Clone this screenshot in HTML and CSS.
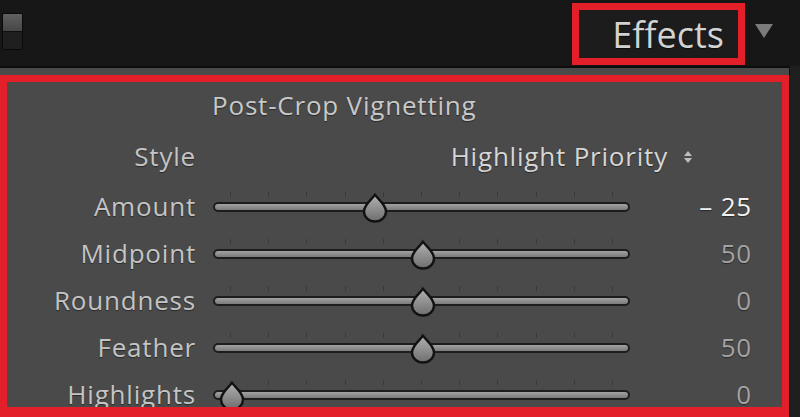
FILE: index.html
```html
<!DOCTYPE html>
<html lang="en">
<head>
<meta charset="utf-8">
<title>Effects – Post-Crop Vignetting</title>
<link rel="stylesheet" href="styles.css">
</head>
<body>
<div class="screen">
  <header class="topbar">
    <div class="toggle"><span class="toggle-on"></span><span class="toggle-off"></span></div>
    <div class="spacer"></div>
    <div class="effects-box"><span class="effects-title">Effects</span></div>
    <svg class="collapse" width="18" height="14" viewBox="0 0 18 14"><polygon points="0,0 18,0 9,14" fill="#7b7b7b"/></svg>
  </header>
  <div class="body-row">
    <section class="panel">
      <div class="highlight">
        <div class="grid">
          <div class="title">Post-Crop Vignetting</div>

          <div class="label style-label">Style</div>
          <div class="style-value">
            <span>Highlight Priority</span>
            <svg class="updown" width="8" height="12" viewBox="0 0 8 12"><polygon points="0,5 4,0 8,5" fill="#bdbdbd"/><polygon points="0,7 4,12 8,7" fill="#bdbdbd"/></svg>
          </div>

          <div class="label">Amount</div>
          <div class="slider">
            <div class="track"></div>
            <svg class="thumb" style="left:149px" width="26" height="30" viewBox="0 0 26 30"><use href="#drop"/></svg>
          </div>
          <div class="value value-active">– 25</div>

          <div class="label">Midpoint</div>
          <div class="slider">
            <div class="track"></div>
            <svg class="thumb" style="left:197px" width="26" height="30" viewBox="0 0 26 30"><use href="#drop"/></svg>
          </div>
          <div class="value">50</div>

          <div class="label">Roundness</div>
          <div class="slider">
            <div class="track"></div>
            <svg class="thumb" style="left:197px" width="26" height="30" viewBox="0 0 26 30"><use href="#drop"/></svg>
          </div>
          <div class="value">0</div>

          <div class="label">Feather</div>
          <div class="slider">
            <div class="track"></div>
            <svg class="thumb" style="left:197px" width="26" height="30" viewBox="0 0 26 30"><use href="#drop"/></svg>
          </div>
          <div class="value">50</div>

          <div class="label">Highlights</div>
          <div class="slider">
            <div class="track"></div>
            <svg class="thumb" style="left:6px" width="26" height="30" viewBox="0 0 26 30"><use href="#drop"/></svg>
          </div>
          <div class="value">0</div>
        </div>
      </div>
    </section>
    <div class="gutter"></div>
  </div>
</div>

<svg class="defs" width="0" height="0">
  <defs>
    <linearGradient id="dropfill" x1="0" y1="0" x2="0" y2="1">
      <stop offset="0" stop-color="#b2b2b2"/>
      <stop offset="1" stop-color="#6e6e6e"/>
    </linearGradient>
    <g id="drop">
      <path d="M13 1.5 C15 5.5 24 11 24 18.5 A11 10 0 0 1 2 18.5 C2 11 11 5.5 13 1.5 Z" fill="url(#dropfill)" stroke="#121212" stroke-width="2.4" stroke-linejoin="round"/>
    </g>
  </defs>
</svg>
</body>
</html>
```

FILE: styles.css
```css
html, body {
  margin: 0;
  padding: 0;
  background: #171717;
}

.screen {
  width: 800px;
  height: 417px;
  overflow: hidden;
  font-family: "Open Sans", "Liberation Sans", sans-serif;
}

.topbar {
  height: 66px;
  display: flex;
  align-items: flex-start;
  background: #171717;
}

.toggle {
  margin: 13px 0 0 2px;
  width: 21px;
  height: 37px;
  box-sizing: border-box;
  border: 1px solid #0a0a0a;
  border-radius: 2px;
  display: flex;
  flex-direction: column;
  overflow: hidden;
}

.toggle-on {
  height: 17px;
  background: linear-gradient(#606060, #464646);
}

.toggle-off {
  flex: 1;
  background: #1f1f1f;
  border-top: 1px solid #0e0e0e;
}

.spacer {
  flex: 1;
}

.effects-box {
  margin-top: 3px;
  width: 173px;
  height: 62px;
  box-sizing: border-box;
  border: 7px solid #e3202a;
  background: #1c1c1c;
  display: flex;
  align-items: center;
  justify-content: flex-end;
  padding-right: 14px;
}

.effects-title {
  font-size: 36px;
  line-height: 1;
  color: #d2d2d2;
  text-shadow: 0 1px 1px rgba(0, 0, 0, 0.6);
  position: relative;
  top: 1px;
}

.collapse {
  margin: 24px 27px 0 10px;
}

.body-row {
  display: flex;
  height: 351px;
}

.panel {
  width: 789px;
  border-top: 2px solid #0d0d0d;
  background: #4a4a4a;
  padding-top: 7px;
  box-sizing: border-box;
}

.gutter {
  flex: 1;
  background: #1f1f1f;
  border-left: 1px solid #0e0e0e;
}

.highlight {
  height: 342px;
  box-sizing: border-box;
  border: 7px solid #e3202a;
  border-bottom-width: 10px;
  overflow: hidden;
}

.grid {
  display: grid;
  grid-template-columns: 189px 435px 121px;
  grid-template-rows: 47px 54px repeat(5, 47px);
  color: #c4c4c4;
  font-size: 26px;
  letter-spacing: 0.8px;
  text-shadow: 0 1px 1px rgba(0, 0, 0, 0.45);
}

.grid > .slider {
  margin-left: 17px;
}

.title {
  grid-column: 2 / span 2;
  margin-left: 16px;
  line-height: 47px;
  color: #c8c8c8;
}

.label {
  grid-column: 1;
  text-align: right;
  line-height: 47px;
  white-space: nowrap;
}

.style-label {
  line-height: 54px;
}

.style-value {
  grid-column: 2 / span 2;
  display: flex;
  align-items: center;
  justify-content: flex-end;
  gap: 16px;
  padding-right: 60px;
  color: #d6d6d6;
  white-space: nowrap;
}

.updown {
  position: relative;
  top: 1px;
}

.slider {
  position: relative;
  display: flex;
  align-items: center;
  width: 417px;
  background-image: repeating-linear-gradient(to right, #393939 0 1px, transparent 1px 38.2px);
  background-size: 384px 5px;
  background-position: 17px 9px;
  background-repeat: no-repeat;
}

.track {
  width: 100%;
  height: 10px;
  box-sizing: border-box;
  border: 2px solid #1d1d1d;
  border-radius: 5px;
  background: linear-gradient(to bottom, #a2a2a2, #7a7a7a);
}

.thumb {
  position: absolute;
  top: 10px;
}

.value {
  grid-column: 3;
  text-align: right;
  line-height: 47px;
  color: #a3a3a3;
  white-space: nowrap;
}

.value-active {
  color: #f2f2f2;
}

.defs {
  position: absolute;
  width: 0;
  height: 0;
}
```
